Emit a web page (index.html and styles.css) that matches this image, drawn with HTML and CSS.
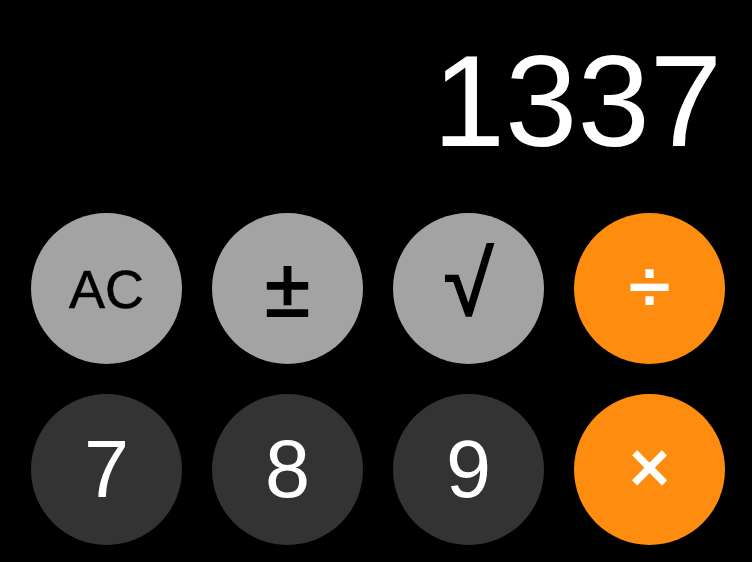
FILE: index.html
```html
<!DOCTYPE html>
<html>
<head>
<meta charset="utf-8">
<link rel="stylesheet" href="styles.css">
</head>
<body>
<div class="calc">
  <div class="display">1337</div>
  <div class="keys">
    <div class="key fn small">AC</div>
    <div class="key fn sym">±</div>
    <div class="key fn sym root">√</div>
    <div class="key op sym div">÷</div>
    <div class="key num">7</div>
    <div class="key num">8</div>
    <div class="key num">9</div>
    <div class="key op sym mul">×</div>
  </div>
</div>
</body>
</html>
```
FILE: styles.css
```css
html, body {
  margin: 0;
  padding: 0;
  background: #000;
}
.calc {
  width: 752px;
  height: 562px;
  box-sizing: border-box;
  padding: 36px 30px 0 31px;
  font-family: "Liberation Sans", Arial, sans-serif;
  overflow: hidden;
}
.display {
  color: #fff;
  font-size: 130px;
  line-height: 130px;
  height: 130px;
  text-align: right;
  margin-bottom: 47px;
}
.keys {
  display: grid;
  grid-template-columns: repeat(4, 151px);
  grid-auto-rows: 151px;
  gap: 30px;
}
.key {
  border-radius: 50%;
  display: flex;
  align-items: center;
  justify-content: center;
  font-size: 81px;
  line-height: 1;
  box-sizing: border-box;
}
.fn {
  background: #a3a3a3;
  color: #000;
}
.small {
  font-size: 54px;
  -webkit-text-stroke: 0.6px currentColor;
}
.sym {
  -webkit-text-stroke: 2px currentColor;
}
.root {
  font-size: 90px;
  padding-bottom: 10px;
}
.div {
  font-size: 74px;
  padding-bottom: 4px;
}
.mul {
  font-size: 72px;
  padding-bottom: 5px;
}
.op {
  background: #fe8d0f;
  color: #fff;
}
.num {
  background: #333333;
  color: #fff;
}
```
